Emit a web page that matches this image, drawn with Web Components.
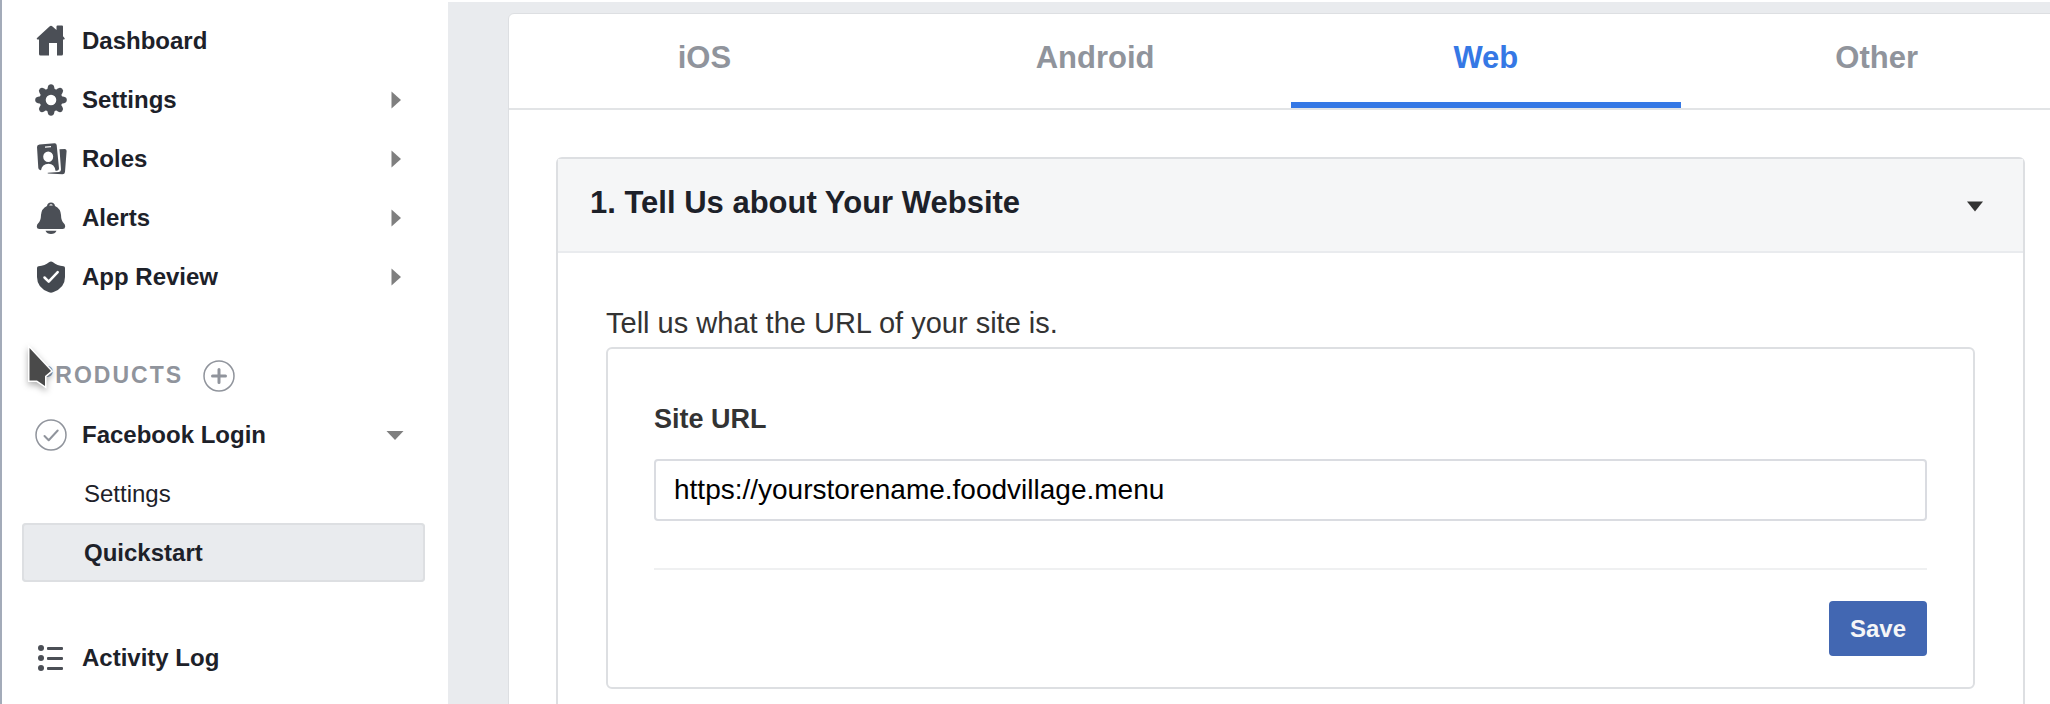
<!DOCTYPE html>
<html lang="en">
<head>
<meta charset="utf-8">
<title>Quickstart</title>
<style>
body{margin:0;font-family:"Liberation Sans",Arial,sans-serif;color:#1d2129;background:#fff}
</style>
</head>
<body>
<app-shell>
  <side-nav slot="nav">
    <nav-group>
      <nav-row icon="home">Dashboard</nav-row>
      <nav-row icon="gear" arrow="right">Settings</nav-row>
      <nav-row icon="roles" arrow="right">Roles</nav-row>
      <nav-row icon="bell" arrow="right">Alerts</nav-row>
      <nav-row icon="shield" arrow="right">App Review</nav-row>
    </nav-group>
    <nav-group>
      <nav-heading>PRODUCTS</nav-heading>
      <nav-row icon="check" arrow="down">Facebook Login</nav-row>
      <nav-row sub>Settings</nav-row>
      <nav-row sub current>Quickstart</nav-row>
    </nav-group>
    <nav-group>
      <nav-row icon="list">Activity Log</nav-row>
    </nav-group>
  </side-nav>
  <platform-card>
    <platform-tab slot="tabs">iOS</platform-tab>
    <platform-tab slot="tabs">Android</platform-tab>
    <platform-tab slot="tabs" selected>Web</platform-tab>
    <platform-tab slot="tabs">Other</platform-tab>
    <step-section>
      <span slot="title">1. Tell Us about Your Website</span>
      <site-form>Tell us what the URL of your site is.</site-form>
    </step-section>
  </platform-card>
</app-shell>
<mouse-pointer></mouse-pointer>
<script>
const define = (name, html, setup) => customElements.define(name, class extends HTMLElement {
  constructor() {
    super();
    this.attachShadow({ mode: 'open' }).innerHTML = '<style>*{box-sizing:border-box}</style>' + html;
  }
  connectedCallback() { if (setup) setup(this, this.shadowRoot); }
});

const icons = {
  home: '<path fill="#4b4f56" d="M16 .8q.8 0 1.500.6L21.500 5V1.500q0-1 1-1H27q1 0 1 1v9.700l1.500 1.700q.7 1.200-.5 1.600h-1V29q0 1.500-1.500 1.500H22V18h-8v12.500H5.500Q4 30.500 4 29V14.500H2.500q-1.400-.4-.5-1.600L14.500 1.400Q15.200.8 16 .8z"/>',
  gear: '<g fill="#4b4f56"><path fill-rule="evenodd" d="M16 4.500a11.500 11.500 0 1 0 0 23 11.500 11.500 0 0 0 0-23zm0 6.200a5.300 5.300 0 1 1 0 10.600 5.300 5.300 0 0 1 0-10.600z"/>' +
    [0, 45, 90, 135, 180, 225, 270, 315].map(a => `<path transform="rotate(${a} 16 16)" d="M12 7 12.800 3Q13.400.2 16 .2T19.200 3L20 7z"/>`).join('') + '</g>',
  roles: '<path fill="#4b4f56" fill-rule="evenodd" d="M4.500 1.500 19.500.3q2-.1 2.200 1.900L24 25.500q0 2-2 2.300l-1.500-.1q-1-6.700-7-6.900-6.500.2-7.500 6.400l-1-.2q-1.500-.3-1.700-2L2 4q0-2.200 2.500-2.500zM10 4.800l6-.5V3l-6 .5zM13.200 8.500a5 5.300 0 1 0 0 10.600 5 5.300 0 0 0 0-10.600z"/><path fill="#4b4f56" d="M24.500 6.300 30 6q1.700.3 1.600 2L30 29q-.3 2.300-2.500 2.300L13 30.500q-1-.5 0-.8l11-.7q2-.4 2-2.600z"/>',
  bell: '<path fill="#4b4f56" fill-rule="evenodd" d="M16 .5a4 4 0 0 1 4 3.500q5.500 2.500 6 9 .1 6 3 8.500 1.200 1 1.200 3-.1 2.500-2.700 2.500h-23Q1.900 27 1.800 24.500q0-2 1.200-3 2.900-2.500 3-8.500.5-6.500 6-9a4 4 0 0 1 4-3.500zm0 1.800q-1.400 0-1.800 1.300h3.600Q17.400 2.300 16 2.300zM10.500 28.800h11Q20 32 16 32t-5.500-3.200z"/>',
  shield: '<path fill="#444950" d="M16 .5q1 0 2 .8 4 3.500 10.500 3.900 1.500.2 1.500 1.800v9q0 11-12 15.300-2 .8-4 0Q2 27 2 16V7q0-1.600 1.500-1.800Q10 4.800 14 1.300q1-.8 2-.8z"/><path fill="none" stroke="#fff" stroke-width="2.500" stroke-linecap="round" stroke-linejoin="round" d="m9.500 16.500 4.200 4.200 9-9.500"/>',
  check: '<circle cx="16" cy="16" r="15" fill="none" stroke="#90949c" stroke-width="1.500"/><path fill="none" stroke="#90949c" stroke-width="2" stroke-linecap="round" stroke-linejoin="round" d="m9.500 17 4.200 4.200 9-9.700"/>',
  list: '<g fill="#4b4f56"><circle cx="6" cy="6" r="3"/><circle cx="6" cy="16" r="3"/><circle cx="6" cy="26" r="3"/><path d="M13 5h14q1 0 1 1v1q0 1-1 1H13q-1 0-1-1V6q0-1 1-1zm0 10h14q1 0 1 1v1q0 1-1 1H13q-1 0-1-1v-1q0-1 1-1zm0 10h14q1 0 1 1v1q0 1-1 1H13q-1 0-1-1v-1q0-1 1-1z"/></g>'
};
const arrows = {
  right: '<path fill="#7f7f7f" d="M6.500 1.500 16 10 6.500 18.500z"/>',
  down: '<path fill="#7f7f7f" d="M1.500 6h17L10 15z"/>'
};

define('app-shell', `<style>
:host{display:grid;grid-template-columns:448px minmax(0,1fr);height:100vh;overflow:hidden}
main{margin-top:2px;padding:11px 0 0 60px;background:#e9ebee;overflow:hidden}
</style><slot name="nav"></slot><main><slot></slot></main>`);

define('side-nav', `<style>
:host{display:block;border-left:2px solid #a3abb9}
nav{display:flex;flex-direction:column;gap:40px;padding:11px 23px 0 20px}
</style><nav><slot></slot></nav>`);

define('nav-group', `<style>:host{display:block}:host(:last-child){margin-top:6px}</style><slot></slot>`);

define('nav-row', `<style>
:host{display:block}
a{display:flex;align-items:center;height:59px;padding:0 20px 0 13px;border-radius:4px;font-size:24px;font-weight:bold;color:#1d2129;text-decoration:none}
.label{flex:1}
.icon{width:32px;height:32px;margin-right:15px}
.arrow{width:20px;height:20px}
:host([sub]) a{padding-left:62px;font-weight:normal}
:host([current]) a{background:#e9ebee;font-weight:bold;box-shadow:inset 0 0 0 2px #dddfe2}
</style><a href="#"><span class="label"><slot></slot></span></a>`, (el, root) => {
  const a = root.querySelector('a');
  if (el.hasAttribute('icon')) a.insertAdjacentHTML('afterbegin', `<svg class="icon" viewBox="0 0 32 32" aria-hidden="true">${icons[el.getAttribute('icon')]}</svg>`);
  if (el.hasAttribute('arrow')) a.insertAdjacentHTML('beforeend', `<svg class="arrow" viewBox="0 0 20 20" aria-hidden="true">${arrows[el.getAttribute('arrow')]}</svg>`);
  if (el.hasAttribute('current')) a.setAttribute('aria-current', 'page');
});

define('nav-heading', `<style>
:host{display:flex;align-items:center;gap:20px;height:59px;padding-left:16px;font-size:23px;font-weight:bold;letter-spacing:2px;color:#90949c}
button{width:32px;height:32px;padding:0;border:0;background:none}
svg{display:block}
</style><span><slot></slot></span><button aria-label="Add product"><svg width="32" height="32" viewBox="0 0 32 32"><circle cx="16" cy="16" r="15" fill="none" stroke="#90949c" stroke-width="1.500"/><path d="M16 9.500v13M9.500 16h13" stroke="#90949c" stroke-width="3" stroke-linecap="round"/></svg></button>`);

define('platform-card', `<style>
:host{display:block;margin-right:-23px;background:#fff;border:1px solid #dddfe2;border-radius:6px}
.tabs{display:grid;grid-template-columns:repeat(4,1fr);border-bottom:2px solid #e2e4e6}
.body{padding:47px}
</style><div class="tabs" role="tablist"><slot name="tabs"></slot></div><div class="body"><slot></slot></div>`);

define('platform-tab', `<style>
:host{display:block}
button{display:block;width:100%;padding:0;border:0;border-bottom:6px solid transparent;background:none;font:bold 31px/88px "Liberation Sans",Arial,sans-serif;color:#90949c}
:host([selected]) button{color:#3578e5;border-color:#3578e5}
</style><button role="tab"><slot></slot></button>`, (el, root) =>
  root.querySelector('button').setAttribute('aria-selected', el.hasAttribute('selected')));

define('step-section', `<style>
:host{display:block;border:2px solid #dddfe2;border-radius:6px}
header{display:flex;align-items:center;justify-content:space-between;height:94px;padding:0 38px 0 32px;background:#f5f6f7;border-bottom:2px solid #e9ebee}
h2{margin:0;padding-bottom:4px;font-size:31px;line-height:36px}
svg{margin-top:2px}
.body{padding:46px 48px}
</style><header><h2><slot name="title"></slot></h2><svg width="20" height="20" viewBox="0 0 20 20" aria-hidden="true"><path fill="#333" d="M2 5.500h16L10 15.500z"/></svg></header><div class="body"><slot></slot></div>`);

define('site-form', `<style>
:host{display:block}
p{margin:0;font-size:29px;line-height:48px;color:#333}
form{padding:48px 46px 31px;border:2px solid #dddfe2;border-radius:6px}
label{display:block;margin-bottom:18px;font-size:27px;line-height:44px;font-weight:bold;color:#333}
input{display:block;width:100%;height:62px;padding:0 18px;border:2px solid #dadce1;border-radius:4px;background:#fff;font:28px "Liberation Sans",Arial,sans-serif;color:#000}
.actions{display:flex;justify-content:flex-end;margin-top:47px;padding-top:31px;border-top:2px solid #eff0f1}
button{height:55px;min-width:98px;padding:0 20px;border:0;border-radius:4px;background:#4267b2;color:#f5f6f7;font:bold 24px "Liberation Sans",Arial,sans-serif}
</style><p><slot></slot></p><form><label for="url">Site URL</label><input id="url" type="text" value="https://yourstorename.foodvillage.menu"><div class="actions"><button type="button">Save</button></div></form>`);

define('mouse-pointer', `<style>
:host{position:absolute;left:24px;top:342px;pointer-events:none}
svg{display:block;filter:drop-shadow(0 3px 3px rgba(0,0,0,.3))}
</style><svg width="36" height="52" viewBox="0 0 36 52" aria-hidden="true"><path fill="#4a4a4a" stroke="#fff" stroke-width="3" paint-order="stroke" d="M5.500 6 27 29l-6 5v10l-8-5.500H5.500z"/></svg>`);
</script>
</body>
</html>
